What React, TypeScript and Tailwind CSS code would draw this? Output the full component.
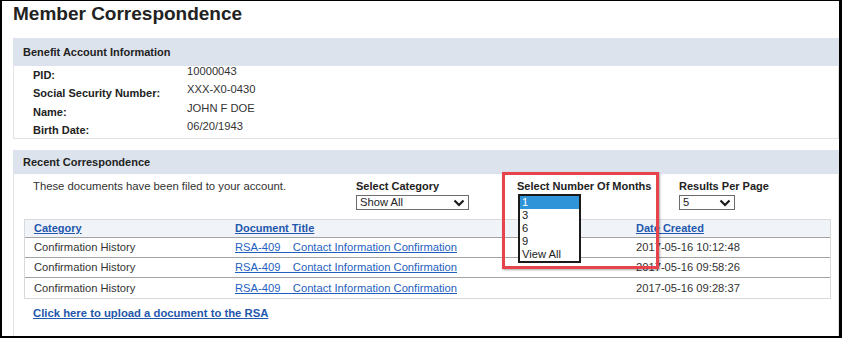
import React from "react";

const Chevron = () => (
  <svg width="12" height="8" viewBox="0 0 12 8" className="shrink-0">
    <polyline points="1.5,1.5 6,6 10.5,1.5" fill="none" stroke="#1a1a1a" strokeWidth="2.2" />
  </svg>
);

const FakeSelect = ({ value, width }: { value: string; width: string }) => (
  <div
    className={`${width} h-[15px] mt-[2px] border border-[#6b6b6b] bg-white flex items-center justify-between pl-[3px] pr-[3px] text-[11.2px] leading-[13px] text-[#222]`}
  >
    <span>{value}</span>
    <Chevron />
  </div>
);

const rows = [
  { date: "2017-05-16 10:12:48" },
  { date: "2017-05-16 09:58:26" },
  { date: "2017-05-16 09:28:37" },
];

export default function App() {
  const info = [
    ["PID:", "10000043"],
    ["Social Security Number:", "XXX-X0-0430"],
    ["Name:", "JOHN F DOE"],
    ["Birth Date:", "06/20/1943"],
  ];
  return (
    <div
      className="relative w-[842px] h-[338px] overflow-hidden bg-white border-black border-l-2 border-t border-r-[3px] border-b-2 flex flex-col text-[#222]"
      style={{ fontFamily: '"Liberation Sans", Arial, sans-serif' }}
    >
      <h1 className="pl-[11px] pt-[2px] text-[19px] leading-[22px] font-bold text-[#222]">
        Member Correspondence
      </h1>

      {/* Benefit Account Information */}
      <div className="ml-[11px] mt-[13px] flex flex-col">
        <div className="h-[28px] bg-[#dde3ec] flex items-center pl-[10px] text-[11px] leading-[13px] font-bold text-[#222]">
          Benefit Account Information
        </div>
        <div className="border-l border-r border-b border-[#e2e2e2] h-[73px] flex flex-col">
          {info.map(([label, value]) => (
            <div key={label} className="h-[18.3px] flex">
              <div className="w-[173px] pl-[19px] text-[11px] leading-[18.3px] font-bold text-[#222]">
                {label}
              </div>
              <div className="text-[11.2px] leading-[10.5px] text-[#333]">{value}</div>
            </div>
          ))}
        </div>
      </div>

      {/* Recent Correspondence */}
      <div className="ml-[11px] mt-[11px] flex flex-col flex-1">
        <div className="h-[24px] bg-[#dde3ec] flex items-center pl-[10px] text-[11px] leading-[13px] font-bold text-[#222]">
          Recent Correspondence
        </div>
        <div className="flex-1 border-l border-r border-[#e2e2e2] flex flex-col">
          <div className="flex pt-[6px] text-[11px] leading-[13px]">
            <div className="w-[342px] pl-[19px] text-[11.3px] text-[#333]">
              These documents have been filed to your account.
            </div>
            <div className="w-[161px] flex flex-col">
              <div className="font-bold text-[#222]">Select Category</div>
              <FakeSelect value="Show All" width="w-[113px]" />
            </div>
            <div className="w-[162px] flex flex-col">
              <div className="font-bold text-[#222]">Select Number Of Months</div>
              <div className="h-[15px] mt-[2px]" />
            </div>
            <div className="flex flex-col">
              <div className="font-bold text-[#222]">Results Per Page</div>
              <FakeSelect value="5" width="w-[56px]" />
            </div>
          </div>

          <div className="ml-[10px] mr-[7px] mt-[9px] border border-[#d9d9d9] text-[11.2px]">
            <div className="h-[18px] bg-[#f0f3f8] border-b border-[#a3a3a3] grid grid-cols-[200px_401px_1fr] items-center leading-[13px] text-[11px]">
              <a className="pl-[9px] font-bold underline text-[#1f58ad]">Category</a>
              <a className="pl-[10px] font-bold underline text-[#1f58ad]">Document Title</a>
              <a className="pl-[10px] font-bold underline text-[#1f58ad]">Date Created</a>
            </div>
            {rows.map((r, i) => (
              <div
                key={r.date}
                className={`h-[20px] grid grid-cols-[200px_401px_1fr] items-center leading-[13px] ${
                  i < rows.length - 1 ? "border-b border-[#a3a3a3]" : ""
                }`}
              >
                <div className="pl-[9px] text-[#333]">Confirmation History</div>
                <div className="pl-[10px]">
                  <a className="underline text-[#1f5fbf] whitespace-pre">
                    {"RSA-409    Contact Information Confirmation"}
                  </a>
                </div>
                <div className="pl-[10px] text-[#333]">{r.date}</div>
              </div>
            ))}
          </div>

          <div className="mt-[8px] pl-[19px] text-[11.3px] leading-[13px]">
            <a className="font-bold underline text-[#1f58ad]">
              Click here to upload a document to the RSA
            </a>
          </div>
        </div>
      </div>

      {/* Open listbox */}
      <div className="absolute left-[516px] top-[193px] w-[63px] h-[69px] border-2 border-[#1a1a1a] bg-white flex flex-col text-[11.2px] leading-[13px] text-[#222]">
        <div className="bg-[#2f95d8] text-white pl-[2px]">1</div>
        <div className="pl-[2px]">3</div>
        <div className="pl-[2px]">6</div>
        <div className="pl-[2px]">9</div>
        <div className="pl-[2px]">View All</div>
      </div>

      {/* Red highlight box */}
      <div className="absolute left-[500px] top-[171px] w-[157px] h-[97px] border-[3px] border-[#e6434c] shadow-[1px_1px_2px_rgba(0,0,0,0.35)]" />
    </div>
  );
}
